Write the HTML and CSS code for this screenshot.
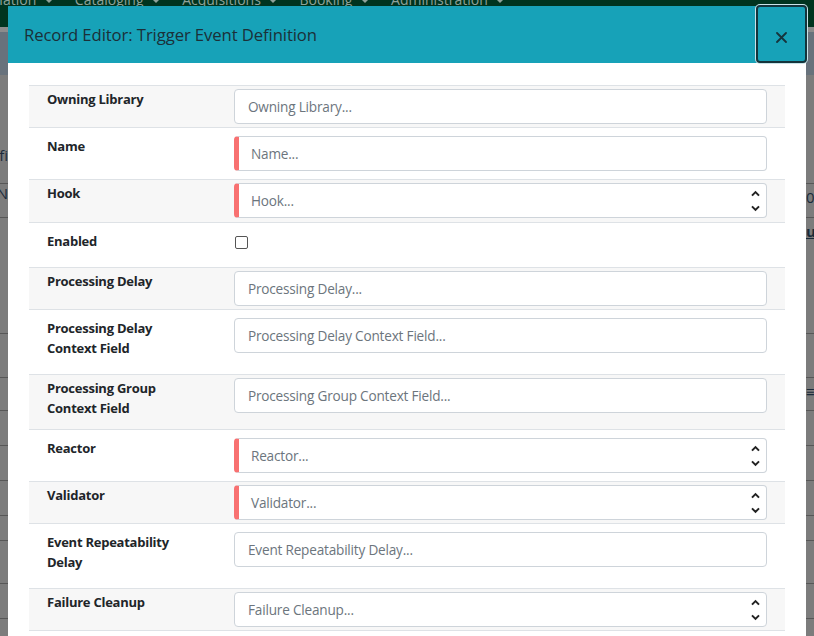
FILE: index.html
```html
<!DOCTYPE html>
<html>
<head>
<meta charset="utf-8">
<title>Record Editor: Trigger Event Definition</title>
<link rel="stylesheet" href="styles.css">
</head>
<body>
<div class="page">
  <div class="nav">
    <span class="nav-item first">Circulation <i class="caret"></i></span>
    <span class="nav-item">Cataloging <i class="caret"></i></span>
    <span class="nav-item">Acquisitions <i class="caret"></i></span>
    <span class="nav-item">Booking <i class="caret"></i></span>
    <span class="nav-item">Administration <i class="caret"></i></span>
  </div>
  <div class="subbar"></div>
  <div class="band"></div>
  <div class="bg-rows">
    <div class="bg-row h109"><span class="bg-left t80">fi</span><span class="bg-right"></span></div>
    <div class="bg-row h34"><span class="bg-left t8">N</span><span class="bg-right t20">0</span></div>
    <div class="bg-row h116"><span class="bg-left"></span><span class="bg-right u t30">u</span></div>
    <div class="bg-row h44"></div>
    <div class="bg-row h33"><span class="bg-left"></span><span class="bg-right">≡</span></div>
    <div class="bg-row h35"></div>
    <div class="bg-row h35"></div>
    <div class="bg-row h35"></div>
    <div class="bg-row h25"></div>
    <div class="bg-row h43"></div>
    <div class="bg-row h35"></div>
  </div>
</div>

<div class="modal">
  <div class="modal-header">
    <h4 class="modal-title">Record Editor: Trigger Event Definition</h4>
    <button class="close-btn" type="button" aria-label="Close">
      <svg width="11" height="11" viewBox="0 0 11 11"><path d="M1 1L10 10M10 1L1 10" stroke="#16343c" stroke-width="1.8" stroke-linecap="round" fill="none"/></svg>
    </button>
  </div>
  <div class="modal-body">
    <div class="form-row striped">
      <label class="lbl">Owning Library</label>
      <div class="ctl"><div class="field"><span class="ph">Owning Library...</span></div></div>
    </div>
    <div class="form-row">
      <label class="lbl">Name</label>
      <div class="ctl"><div class="field required"><span class="ph">Name...</span></div></div>
    </div>
    <div class="form-row striped extra">
      <label class="lbl">Hook</label>
      <div class="ctl"><div class="field required select"><span class="ph">Hook...</span><span class="arrows"><svg width="9" height="22" viewBox="0 0 9 22"><path d="M1 5.6L4.5 2.1L8 5.6M1 16.4L4.5 19.9L8 16.4" stroke="#222" stroke-width="2" fill="none"/></svg></span></div></div>
    </div>
    <div class="form-row">
      <label class="lbl">Enabled</label>
      <div class="ctl"><span class="checkbox"></span></div>
    </div>
    <div class="form-row striped">
      <label class="lbl">Processing Delay</label>
      <div class="ctl"><div class="field"><span class="ph">Processing Delay...</span></div></div>
    </div>
    <div class="form-row">
      <label class="lbl">Processing Delay<br>Context Field</label>
      <div class="ctl"><div class="field"><span class="ph">Processing Delay Context Field...</span></div></div>
    </div>
    <div class="form-row striped">
      <label class="lbl">Processing Group<br>Context Field</label>
      <div class="ctl"><div class="field"><span class="ph">Processing Group Context Field...</span></div></div>
    </div>
    <div class="form-row">
      <label class="lbl">Reactor</label>
      <div class="ctl"><div class="field required select"><span class="ph">Reactor...</span><span class="arrows"><svg width="9" height="22" viewBox="0 0 9 22"><path d="M1 5.6L4.5 2.1L8 5.6M1 16.4L4.5 19.9L8 16.4" stroke="#222" stroke-width="2" fill="none"/></svg></span></div></div>
    </div>
    <div class="form-row striped">
      <label class="lbl">Validator</label>
      <div class="ctl"><div class="field required select"><span class="ph">Validator...</span><span class="arrows"><svg width="9" height="22" viewBox="0 0 9 22"><path d="M1 5.6L4.5 2.1L8 5.6M1 16.4L4.5 19.9L8 16.4" stroke="#222" stroke-width="2" fill="none"/></svg></span></div></div>
    </div>
    <div class="form-row">
      <label class="lbl">Event Repeatability<br>Delay</label>
      <div class="ctl"><div class="field"><span class="ph">Event Repeatability Delay...</span></div></div>
    </div>
    <div class="form-row striped last">
      <label class="lbl">Failure Cleanup</label>
      <div class="ctl"><div class="field select"><span class="ph">Failure Cleanup...</span><span class="arrows"><svg width="9" height="22" viewBox="0 0 9 22"><path d="M1 5.6L4.5 2.1L8 5.6M1 16.4L4.5 19.9L8 16.4" stroke="#222" stroke-width="2" fill="none"/></svg></span></div></div>
    </div>
  </div>
</div>
</body>
</html>
```
FILE: styles.css
```css
* { box-sizing: border-box; }
html, body { margin: 0; padding: 0; }
body {
  width: 814px;
  height: 636px;
  overflow: hidden;
  font-family: "Open Sans", "Noto Sans", Arial, sans-serif;
  background: #7c7c7c;
  position: relative;
}

/* dimmed page behind the modal */
.page { width: 814px; }
.nav {
  height: 27px;
  background: #00341f;
  display: flex;
  gap: 22px;
  color: #8fa199;
  font-size: 14px;
  line-height: 14px;
  white-space: nowrap;
  overflow: hidden;
}
.nav-item { margin-top: -7px; }
.nav-item.first { margin-left: -34px; }
.caret {
  display: inline-block;
  width: 0; height: 0;
  border-left: 4px solid transparent;
  border-right: 4px solid transparent;
  border-top: 4px solid #8fa199;
  vertical-align: middle;
  margin-left: 5px;
}
.subbar { height: 5px; background: #8c8c8c; }
.band { height: 43px; background: #68727c; }
.bg-rows { display: flex; flex-direction: column; }
.bg-row {
  border-bottom: 1px solid #575757;
  display: flex;
  justify-content: space-between;
  align-items: flex-start;
  font-size: 15px;
  line-height: 18px;
  color: #1a2a3a;
}
.h109 { height: 109px; }
.h34 { height: 34px; }
.h116 { height: 116px; }
.h44 { height: 44px; }
.h33 { height: 33px; }
.h35 { height: 35px; }
.h25 { height: 25px; }
.h43 { height: 43px; }
.t80 { margin-top: 71px; }
.t8 { margin-top: 0; }
.t20 { margin-top: 13px; }
.t30 { margin-top: 22px; }
.bg-left { width: 8px; overflow: hidden; direction: rtl; }
.bg-right { width: 8px; overflow: hidden; margin-top: 4px; }
.bg-right.u { text-decoration: underline; font-weight: 700; }

/* modal */
.modal {
  position: absolute;
  left: 8px;
  top: 6px;
  width: 798px;
  height: 640px;
  background: #fff;
}
.modal-header {
  height: 57px;
  background: #17a2b8;
  display: flex;
  align-items: center;
  justify-content: space-between;
  padding-left: 16px;
}
.modal-title {
  margin: 0;
  font-size: 16.7px;
  font-weight: 400;
  color: #1b3038;
  letter-spacing: -0.1px;
}
.close-btn {
  width: 51px;
  height: 58px;
  margin-top: -2px;
  margin-right: -1px;
  background: #17a2b8;
  border: 2px solid #14343b;
  border-radius: 4px;
  box-shadow: 0 0 0 1px #c9e3e8;
  display: flex;
  align-items: center;
  justify-content: center;
  padding: 0;
}
.close-btn svg { margin-top: 8px; }

.modal-body { padding: 22px 21px 0 21px; }
.form-row {
  display: grid;
  grid-template-columns: 187px 1fr;
  border-top: 1px solid #dee2e6;
  padding: 8px 18px 8px 18px;
  background: #fff;
}
.form-row.striped { background: #f7f7f7; padding: 3px 18px 3px 18px; }
.form-row.striped.extra { padding-bottom: 4px; }
.form-row.last { border-bottom: 1px solid #dee2e6; }
.lbl {
  font-size: 13px;
  font-weight: 700;
  line-height: 20px;
  color: #212529;
  margin-bottom: 8px;
  letter-spacing: -0.25px;
}
.ctl { display: flex; align-items: flex-start; }
.field {
  flex: 1;
  height: 35px;
  border: 1px solid #ced4da;
  border-radius: 4px;
  background: #fff;
  display: flex;
  align-items: center;
  justify-content: space-between;
  padding: 0 6px 0 13px;
  font-size: 13.6px;
  letter-spacing: -0.2px;
  color: #6c757d;
}
.field.required {
  border-left: 5px solid #f87171;
  padding-left: 12px;
}
.arrows { display: flex; align-items: center; }
.checkbox {
  display: block;
  width: 13px;
  height: 13px;
  margin-top: 5px;
  margin-left: 1px;
  border: 1px solid #555;
  border-radius: 2px;
  background: #fff;
}
```
